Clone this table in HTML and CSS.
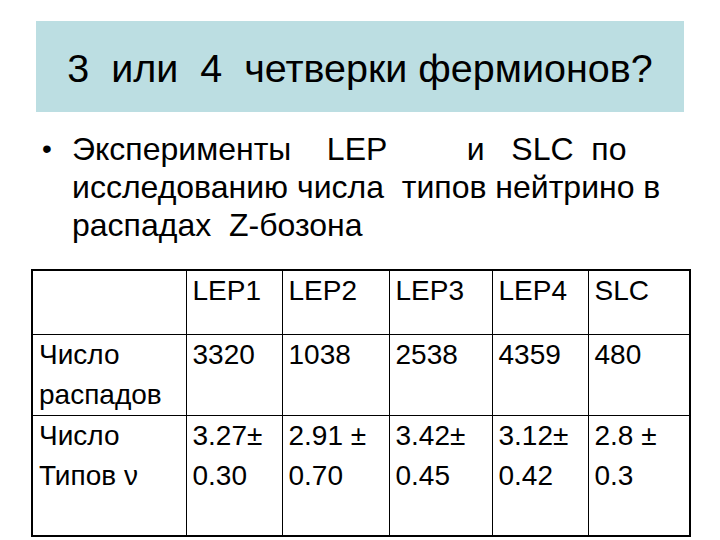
FILE: index.html
```html
<!DOCTYPE html>
<html lang="ru">
<head>
<meta charset="utf-8">
<link rel="stylesheet" href="styles.css">
</head>
<body>
<div class="slide">
  <div class="title-box"><h1 class="title">3  или  4  четверки фермионов?</h1></div>
  <div class="bullet-block">
    <span class="bullet">•</span>
    <p class="bullet-text">Эксперименты    LEP         и   SLC  по<br>исследованию числа  типов нейтрино в<br>распадах  Z-бозона</p>
  </div>
  <table class="data">
    <colgroup>
      <col class="c0"><col class="c1"><col class="c2"><col class="c3"><col class="c4"><col class="c5">
    </colgroup>
    <tr class="r1">
      <td></td><td>LEP1</td><td>LEP2</td><td>LEP3</td><td>LEP4</td><td>SLC</td>
    </tr>
    <tr class="r2">
      <td>Число<br>распадов</td><td>3320</td><td>1038</td><td>2538</td><td>4359</td><td>480</td>
    </tr>
    <tr class="r3">
      <td>Число<br>Типов ν</td><td>3.27±<br>0.30</td><td>2.91 ±<br>0.70</td><td>3.42±<br>0.45</td><td>3.12±<br>0.42</td><td>2.8 ±<br>0.3</td>
    </tr>
  </table>
</div>
</body>
</html>
```
FILE: styles.css
```css
html, body {
  margin: 0;
  padding: 0;
  background: #ffffff;
}
.slide {
  width: 720px;
  height: 540px;
  position: relative;
  overflow: hidden;
  font-family: "Liberation Sans", Arial, sans-serif;
  color: #000;
}
.title-box {
  margin: 21px 0 0 36px;
  width: 648px;
  height: 91px;
  background: #bcdee2;
  display: flex;
  align-items: center;
  justify-content: center;
}
.title {
  margin: 2px 0 0 0;
  font-weight: normal;
  font-size: 39.5px;
  line-height: 44px;
  white-space: pre;
}
.bullet-block {
  display: flex;
  margin: 18px 0 0 42px;
}
.bullet {
  font-size: 28px;
  line-height: 38px;
  width: 30px;
}
.bullet-text {
  margin: 0;
  font-size: 32px;
  line-height: 38px;
  white-space: pre;
}
.data {
  margin: 25px 0 0 31px;
  border-collapse: collapse;
  border: 2px solid #000;
  table-layout: fixed;
  width: 658px;
  font-size: 28px;
  line-height: 40px;
}
.data td {
  border: 1px solid #000;
  vertical-align: top;
  padding: 0 0 0 6px;
}
.c0 { width: 154px; }
.c1 { width: 96px; }
.c2 { width: 107px; }
.c3 { width: 103px; }
.c4 { width: 96px; }
.c5 { width: 102px; }
.r1 { height: 64px; }
.r2 { height: 80px; }
.r3 { height: 121px; }
```
